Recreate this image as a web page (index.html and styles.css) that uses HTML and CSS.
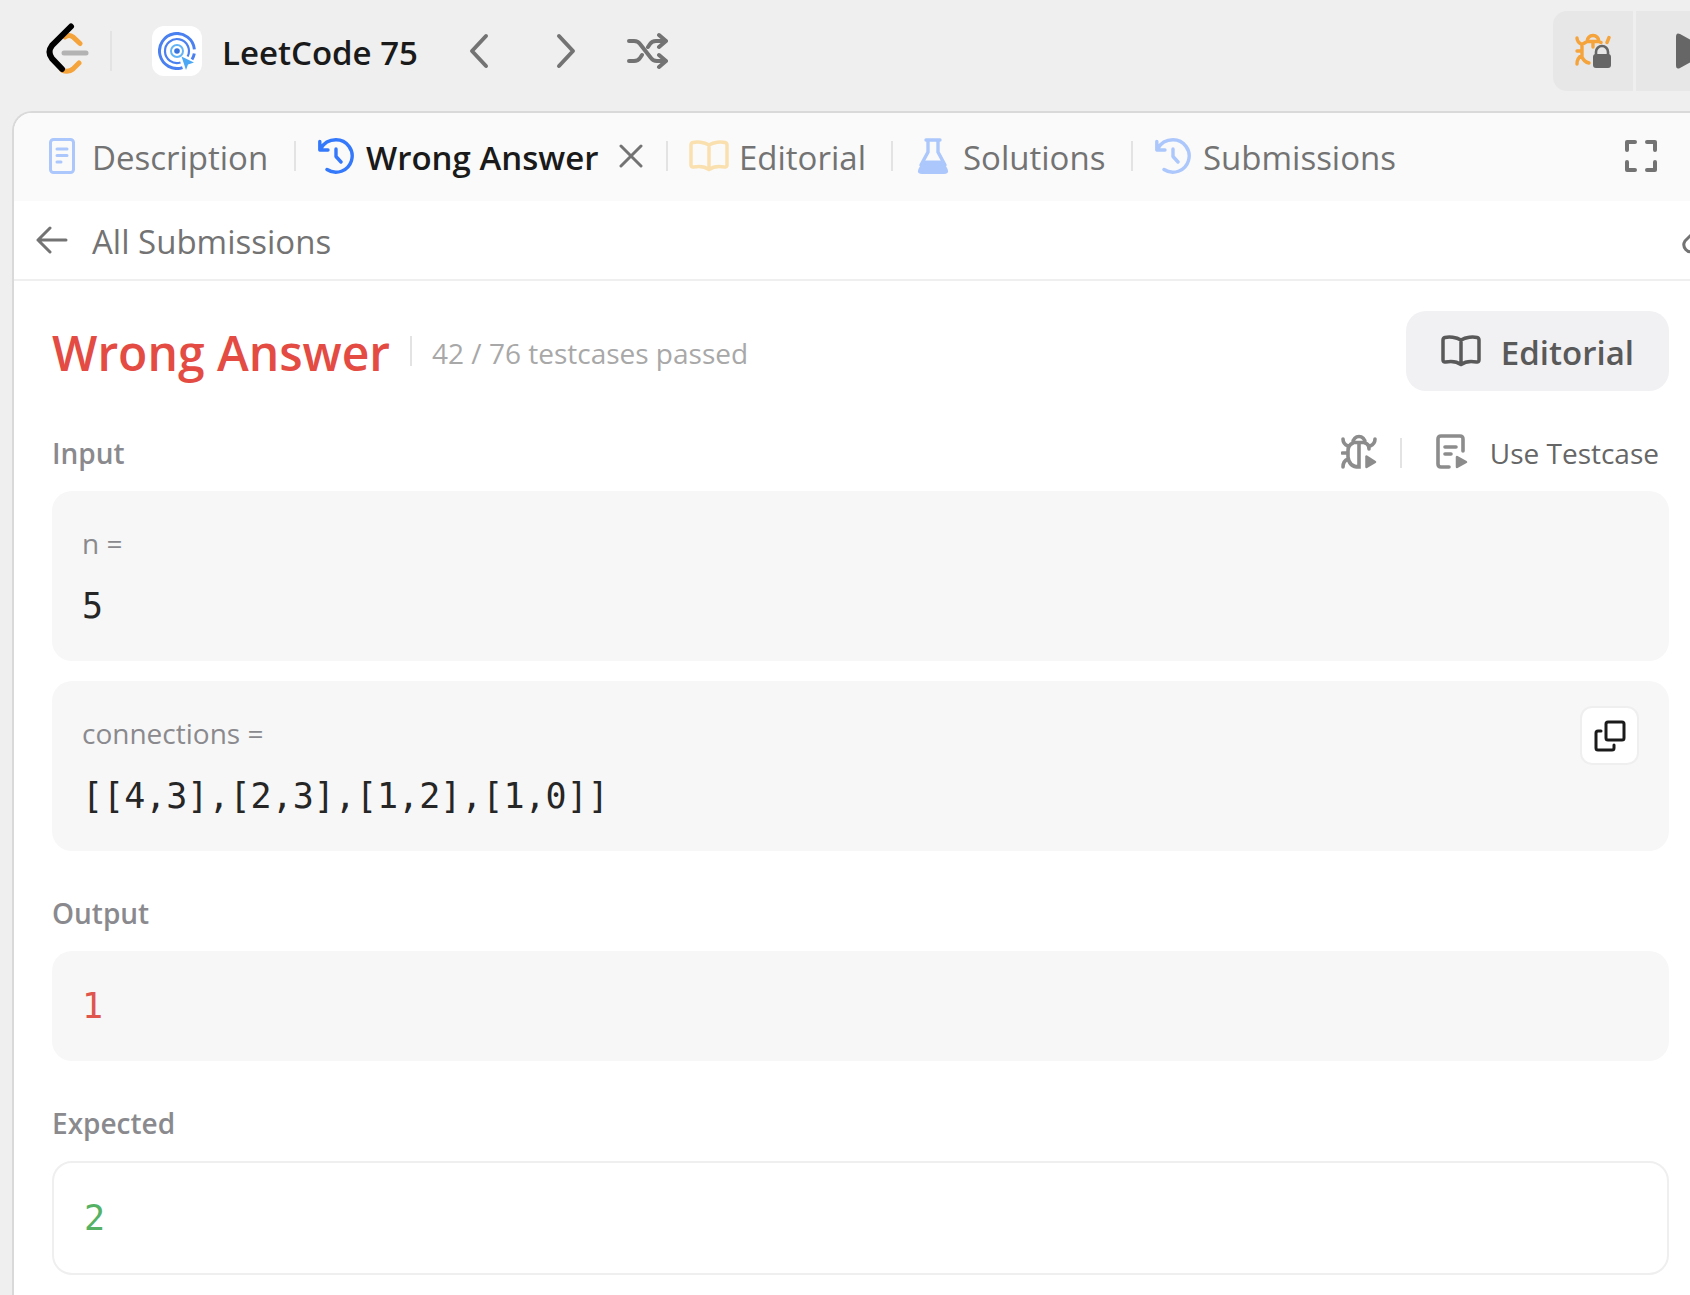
FILE: index.html
```html
<!DOCTYPE html>
<html lang="en">
<head>
<meta charset="utf-8">
<title>LeetCode 75 - Wrong Answer</title>
<link rel="stylesheet" href="styles.css">
</head>
<body>
<svg class="sprite" aria-hidden="true">
  <symbol id="book" viewBox="0 0 40 32"><path d="M20 5C15 2 8 1.500 4 2.500Q2 3 2 5V25Q2 27.500 4.500 27C10 26 16 26.500 20 29.500C24 26.500 30 26 35.500 27Q38 27.500 38 25V5Q38 3 36 2.500C32 1.500 25 2 20 5V29" fill="none" stroke="currentColor" stroke-width="3.500" stroke-linejoin="round"/></symbol>
  <symbol id="history" viewBox="0 0 36 36"><path d="M1.800 3.500V12H10M2.500 11C5.500 5.500 11 1.800 18 1.800A16.200 16.200 0 1 1 9 31.500M18 11V18.500L23 24" fill="none" stroke="currentColor" stroke-width="3.400" stroke-linecap="round" stroke-linejoin="round"/></symbol>
</svg>

<header class="topbar">
  <a class="logo" href="#" aria-label="LeetCode home">
    <svg width="44" height="52" viewBox="0 0 44 52" fill="none" stroke-width="5" stroke-linecap="round">
      <path d="M19 14Q23 11 27 14L34 20.500M16 47Q22 50 27 46L33 40" stroke="#f5a33b"/>
      <path d="M18 30H40" stroke="#b3b3b3"/>
      <path d="M24 3.500L5 22.500Q0 29 5 35.500L15 46" stroke="#000" stroke-width="6" transform="translate(1 0)"/>
    </svg>
  </a>
  <span class="rule rule-tall"></span>
  <a class="plan" href="#">
    <span class="plan-badge">
      <svg width="38" height="38" viewBox="0 0 38 38" fill="none" stroke="#4a80f0">
        <path d="M36.400 17.300A17.500 17.500 0 1 0 24.500 35.600M36.300 21.500A17.500 17.500 0 0 1 34 27.500" stroke-width="3"/>
        <path d="M29.600 24.600A12 12 0 1 0 22.500 30.500" stroke-width="2.200"/>
        <circle cx="19" cy="19" r="6" stroke="#62b4f7" stroke-width="2"/>
        <circle cx="19" cy="19" r="2.800" fill="#3974dc" stroke="none"/>
        <path d="M23.500 24.500L36 30.500L30 32.500L28 38Z" fill="#4ba8f5" stroke="none"/>
      </svg>
    </span>
    <span class="label">LeetCode 75</span>
  </a>
  <nav class="pager" aria-label="Problems">
    <button type="button" aria-label="Previous"><svg width="20" height="36" viewBox="0 0 20 36"><path d="M17 3L3 18L17 33"/></svg></button>
    <button type="button" aria-label="Next"><svg width="20" height="36" viewBox="0 0 20 36"><path d="M3 3L17 18L3 33"/></svg></button>
    <button type="button" aria-label="Shuffle"><svg width="42" height="38" viewBox="0 0 42 38"><path d="M3 9H8Q12 9 14 12L25 26Q27 29 31 29H40M3 29H8Q12 29 14 26L16 23M22 15L24 12Q26 9 30 9H40M33 3L40 9L33 15M33 23L40 29L33 35"/></svg></button>
  </nav>
  <div class="actions">
    <button type="button" class="action" aria-label="Debugger">
      <svg width="36" height="38" viewBox="0 0 36 38" fill="none" stroke="#f5a33b" stroke-width="3.400" stroke-linecap="round">
        <path d="M12 9.500A6 6 0 0 1 24 9.500ZM2 6Q2 10 7 12.500V23Q2 26 2 32M2 19H7M7 25Q9 30 14 31M7 12.500L12 9.500M18 10V15M24 9.500L26 10.500M34 5.500L32 10.500"/>
        <path d="M21 23V20A6 6 0 0 1 33 20V23" stroke="#666" stroke-width="2.600"/>
        <rect x="18" y="22" width="18" height="14" rx="3" fill="#666" stroke="none"/>
      </svg>
    </button>
    <button type="button" class="action action-run" aria-label="Run">
      <svg width="36" height="38" viewBox="0 0 36 38"><path d="M1 5Q1 0 5 2L31 16Q35 19 31 22L5 36Q1 38 1 33Z" fill="#666"/></svg>
    </button>
  </div>
</header>

<main class="panel">
  <nav class="tabs" aria-label="Problem sections">
    <a class="tab tab-description" href="#">
      <svg class="blue" width="28" height="36" viewBox="0 0 28 36" fill="none" stroke="currentColor" stroke-width="3" stroke-linecap="round"><rect x="2.500" y="1.500" width="23" height="33" rx="3"/><path d="M9 11H19M9 17.500H19M9 24H13"/></svg>
      <span class="label">Description</span>
    </a>
    <span class="rule"></span>
    <span class="tab tab-current">
      <svg class="strong" width="36" height="36"><use href="#history"/></svg>
      <a class="label" href="#" aria-current="page">Wrong Answer</a>
      <button type="button" class="close" aria-label="Close tab"><svg width="24" height="24" viewBox="0 0 24 24"><path d="M2 2L22 22M22 2L2 22"/></svg></button>
    </span>
    <span class="rule"></span>
    <a class="tab tab-editorial" href="#"><svg class="yellow" width="40" height="32"><use href="#book"/></svg><span class="label">Editorial</span></a>
    <span class="rule"></span>
    <a class="tab tab-solutions" href="#">
      <svg class="blue" width="32" height="36" viewBox="0 0 32 36"><path d="M9 2H23M11 2V14L4 27M21 2V14L28 27" fill="none" stroke="currentColor" stroke-width="3.400" stroke-linecap="round"/><path d="M6 22.500H26L30.500 31Q32.500 36 27 36H5Q-0.500 36 1.500 31Z" fill="currentColor"/></svg>
      <span class="label">Solutions</span>
    </a>
    <span class="rule"></span>
    <a class="tab" href="#"><svg class="blue" width="36" height="36"><use href="#history"/></svg><span class="label">Submissions</span></a>
    <button type="button" class="expand" aria-label="Full screen"><svg width="32" height="32" viewBox="0 0 32 32"><path d="M2 10V2H10M22 2H30V10M30 22V30H22M10 30H2V22"/></svg></button>
  </nav>

  <div class="crumbs">
    <a class="back" href="#">
      <svg width="32" height="28" viewBox="0 0 32 28"><path d="M30 14H2M14 2L2 14L14 26"/></svg>
      <span class="label">All Submissions</span>
    </a>
    <button type="button" class="share" aria-label="Copy link"><svg width="36" height="36" viewBox="0 0 36 36"><path d="M15 9L5 19A7 7 0 0 0 14 29L20 25M16 18L25 9A7 7 0 0 1 34 18L28 24"/></svg></button>
  </div>

  <div class="result">
    <div class="verdict">
      <h1 class="label">Wrong Answer</h1>
      <span class="rule"></span>
      <span class="passed label">42 / 76 testcases passed</span>
      <button type="button" class="editorial"><svg width="40" height="32"><use href="#book"/></svg><span class="label">Editorial</span></button>
    </div>

    <section>
      <div class="section-head">
        <h2>Input</h2>
        <div class="tools">
          <button type="button" class="tool" aria-label="Debug testcase">
            <svg width="36" height="36" viewBox="0 0 36 36" fill="none" stroke="#8c8c8c" stroke-width="3.600" stroke-linecap="round">
              <path d="M12 8.500A6 6 0 0 1 24 8.500ZM12 9Q7 11 7 17V23Q8 33 18 33V10M24 9Q28 10 28 15M2 5Q2 10 7 12M34 5Q34 10 29 12M1.500 19H7M2 33Q2 27 7 25"/>
              <path d="M25.500 22.500V33L34 28Z" fill="#8c8c8c" stroke-linejoin="round" stroke-width="2.500"/>
            </svg>
          </button>
          <span class="rule"></span>
          <button type="button" class="tool">
            <svg width="32" height="36" viewBox="0 0 32 36" fill="none" stroke="#8c8c8c" stroke-width="3.600" stroke-linecap="round">
              <path d="M27 17V5Q27 2 24 2H5Q2 2 2 5V30Q2 33 5 33H13M9 13H20M9 20H15"/>
              <path d="M21 23V33L30 28Z" fill="#8c8c8c" stroke-linejoin="round" stroke-width="2.500"/>
            </svg>
            <span>Use Testcase</span>
          </button>
        </div>
      </div>
      <div class="box">
        <div class="name">n =</div>
        <div class="value">5</div>
      </div>
      <div class="box">
        <div class="name">connections =</div>
        <div class="value">[[4,3],[2,3],[1,2],[1,0]]</div>
        <button type="button" class="copy" aria-label="Copy"><svg width="32" height="32" viewBox="0 0 32 32"><rect x="12" y="2" width="18" height="18" rx="2"/><path d="M7 11H4Q2 11 2 13V28Q2 30 4 30H18Q20 30 20 28V25"/></svg></button>
      </div>
    </section>

    <section>
      <h2>Output</h2>
      <div class="box"><div class="value wrong">1</div></div>
    </section>

    <section>
      <h2>Expected</h2>
      <div class="box outlined"><div class="value right">2</div></div>
    </section>
  </div>
</main>
</body>
</html>
```

FILE: styles.css
```css
* { box-sizing: border-box; }

body {
  margin: 0;
  background: #efefef;
  color: #737373;
  font: 33px/48px "Open Sans", "Noto Sans", sans-serif;
  overflow-x: hidden;
}

h1, h2 { margin: 0; font-weight: 600; }
a { color: inherit; text-decoration: none; }

button {
  margin: 0;
  padding: 0;
  border: 0;
  background: none;
  color: inherit;
  font: inherit;
  cursor: pointer;
}

svg { display: block; flex: none; }
.sprite { position: absolute; width: 0; height: 0; }

/* Labels beside icons sit slightly below the row's centre line. */
.label { padding-top: 3px; }

.rule { flex: none; width: 2px; height: 30px; background: #e3e3e3; }
.rule-tall { height: 40px; }

.pager svg, .close svg, .expand svg, .back svg, .share svg, .copy svg {
  fill: none;
  stroke: currentColor;
  stroke-width: 3px;
  stroke-linecap: round;
  stroke-linejoin: round;
}
.pager svg, .expand svg { stroke-width: 4px; }

.topbar { display: flex; align-items: center; height: 102px; padding-left: 46px; }
.logo { margin: -4px 20px 0 0; }
.plan {
  display: flex;
  align-items: center;
  gap: 20px;
  width: 278px;
  margin-left: 40px;
  color: #1a1a1a;
  font-weight: 600;
  white-space: nowrap;
}
.plan-badge { padding: 6px; border-radius: 12px; background: #fff; }
.pager { display: flex; align-items: center; margin-left: 39px; }
.pager button + button { margin-left: 67px; }
.pager button:last-child { margin-left: 50px; }
.actions { display: flex; gap: 3px; margin: 0 -34px 0 auto; }
.action { display: grid; place-items: center; width: 80px; height: 80px; background: #e7e7e7; }
.action:first-child { border-radius: 14px 0 0 14px; }
.action-run { width: 88px; padding-left: 26px; }

.panel {
  min-height: calc(100vh - 111px);
  margin: 9px 0 0 12px;
  border: solid #d9d9d9;
  border-width: 2px 0 0 2px;
  border-radius: 20px 0 0 0;
  background: #fff;
  overflow: hidden;
}

.tabs { display: flex; align-items: center; height: 88px; padding: 0 33px 2px 34px; background: #fafafa; white-space: nowrap; }
.tab { display: flex; align-items: center; gap: 12px; padding: 0 0 0 22px; }
.tab-description { gap: 16px; width: 246px; padding-left: 0; }
.tab-current { width: 370px; color: #1a1a1a; font-weight: 600; }
.tab-editorial { gap: 10px; width: 223px; padding-left: 21px; }
.tab-solutions { width: 238px; padding-left: 24px; gap: 14px; }
.close { margin-left: auto; margin-right: 23px; color: #737373; }
.blue { color: #abc7fb; }
.strong { color: #3478fb; }
.yellow { color: #fae0af; }
.expand { margin-left: auto; }

.crumbs { display: flex; align-items: center; justify-content: space-between; height: 80px; padding-left: 22px; border-bottom: 2px solid #efefef; }
.back { display: flex; align-items: center; gap: 24px; }
.share { margin-right: -26px; }

.result { padding: 30px 21px 20px 38px; }
.verdict { display: flex; align-items: center; gap: 20px; height: 80px; white-space: nowrap; }
.verdict h1 { color: #e34b43; font-size: 48px; }
.passed { color: #a8a8a8; font-size: 28px; }
.editorial {
  display: flex;
  align-items: center;
  gap: 20px;
  height: 80px;
  margin-left: auto;
  padding: 0 35px;
  border-radius: 20px;
  background: #f1f1f4;
  color: #595959;
  font-weight: 600;
}

section { padding-top: 38px; }
.section-head { display: flex; align-items: center; justify-content: space-between; }
h2 { color: #8a8a8e; font-size: 28px; }
.tools { display: flex; align-items: center; gap: 23px; padding-right: 10px; }
.tools .rule { margin-right: 11px; }
.tool { display: flex; align-items: center; gap: 22px; color: #666; font-size: 28px; }
.tool svg { margin-bottom: 2px; }

.box { position: relative; margin-top: 14px; padding: 28px 30px; border-radius: 20px; background: #f7f7f7; }
.box + .box { margin-top: 20px; }
.name { height: 48px; margin-bottom: 12px; color: #8a8a8e; font-size: 28px; }
.value { color: #262626; font: 35px/54px "DejaVu Sans Mono", monospace; }
.wrong { color: #e0554c; }
.right { color: #55b265; }
.outlined { border: 2px solid #efefef; background: #fff; }
.copy {
  position: absolute;
  top: 25px;
  right: 30px;
  display: grid;
  place-items: center;
  width: 59px;
  height: 59px;
  border: 2px solid #efefef;
  border-radius: 12px;
  background: #fff;
  color: #1a1a1a;
}
```
